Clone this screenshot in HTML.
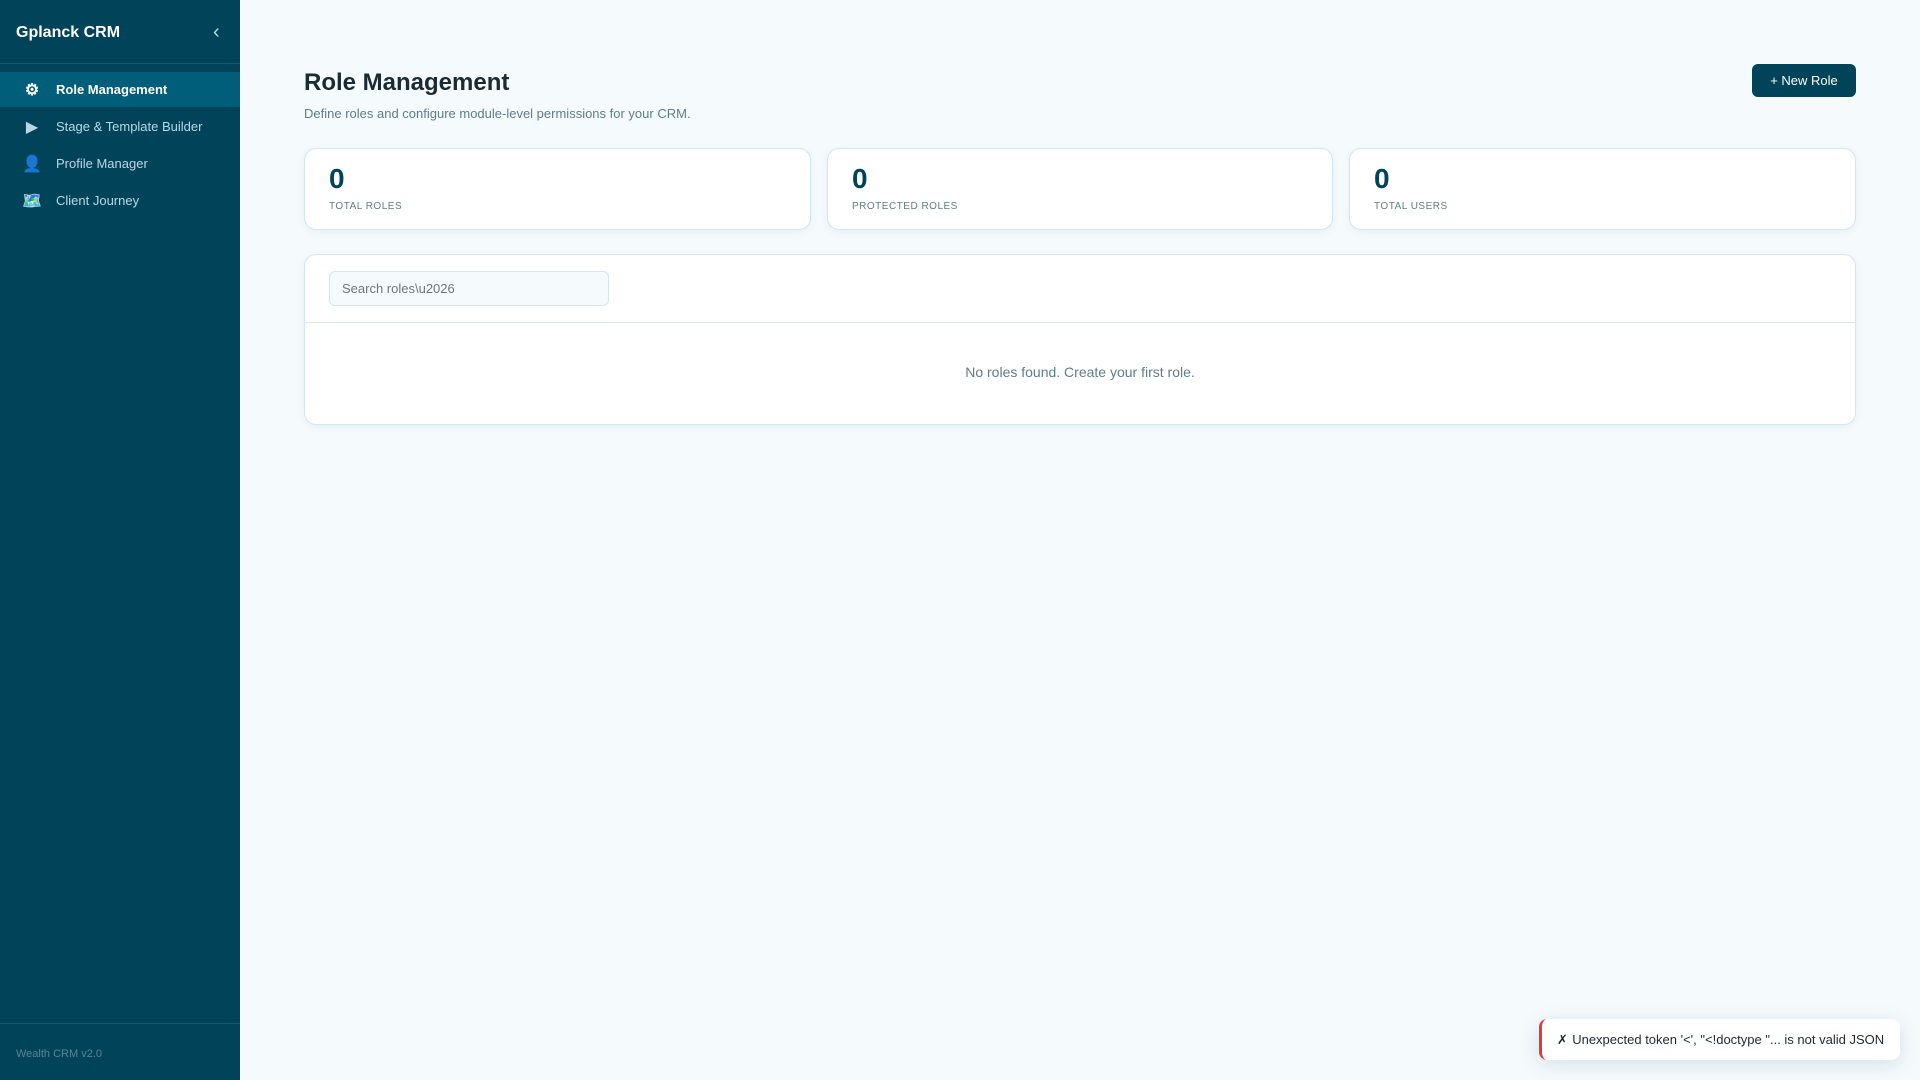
<!DOCTYPE html>
<html>
<head>
<meta charset="utf-8">
<style>
*{box-sizing:border-box;margin:0;padding:0}
html,body{width:1920px;height:1080px;overflow:hidden;background:#f5fafd;font-family:"Liberation Sans",sans-serif}
.abs{position:absolute;white-space:nowrap}
#side{position:absolute;left:0;top:0;width:240px;height:1080px;background:#01445a}
.item{position:absolute;left:0;width:240px;height:35px;color:#b8d8e6;font-size:13px}
.item.on{background:#015e7a;color:#fff;font-weight:700}
.item .ic{position:absolute;left:20px;width:24px;top:1px;height:35px;line-height:35px;text-align:center;font-size:16px}
.item .tx{position:absolute;left:56px;top:0;line-height:35px;white-space:nowrap}
.card{position:absolute;top:148px;height:82px;background:#fff;border:1px solid #d0e8f2;border-radius:12px;box-shadow:0 2px 8px rgba(1,68,90,.06)}
.card b{position:absolute;left:24px;top:14px;font-size:28px;line-height:32px;color:#01445a}
.card span{position:absolute;left:24px;top:52px;font-size:10px;line-height:12px;letter-spacing:.5px;color:#5f7d8a;white-space:nowrap}
</style>
</head>
<body>
<div id="side">
  <div class="abs" style="left:16px;top:22px;font-size:16px;line-height:22px;font-weight:700;color:#fff">Gplanck CRM</div>
  <div class="abs" style="left:213px;top:20px;font-size:20px;line-height:24px;color:#b8d8e6">‹</div>
  <div class="abs" style="left:0;top:63px;width:240px;height:1px;background:#0f5a6c"></div>
  <div class="item on" style="top:72px"><span class="ic">⚙</span><span class="tx">Role Management</span></div>
  <div class="item" style="top:109px"><span class="ic">▶</span><span class="tx">Stage &amp; Template Builder</span></div>
  <div class="item" style="top:146px"><span class="ic">👤</span><span class="tx">Profile Manager</span></div>
  <div class="item" style="top:183px"><span class="ic">🗺️</span><span class="tx">Client Journey</span></div>
  <div class="abs" style="left:0;top:1023px;width:240px;height:1px;background:#0f5a6c"></div>
  <div class="abs" style="left:16px;top:1047px;font-size:11px;line-height:14px;color:#5b8494">Wealth CRM v2.0</div>
</div>

<div class="abs" style="left:304px;top:67px;font-size:24px;line-height:32px;font-weight:700;color:#1a2b33">Role Management</div>
<div class="abs" style="left:304px;top:105px;font-size:13px;line-height:17px;color:#5f7d8a">Define roles and configure module-level permissions for your CRM.</div>
<div class="abs" style="left:1752px;top:64px;width:104px;height:33px;background:#01445a;border-radius:6px;color:#fff;font-size:13px;line-height:33px;text-align:center">+ New Role</div>

<div class="card" style="left:304px;width:507px"><b>0</b><span>TOTAL ROLES</span></div>
<div class="card" style="left:827px;width:506px"><b>0</b><span>PROTECTED ROLES</span></div>
<div class="card" style="left:1349px;width:507px"><b>0</b><span>TOTAL USERS</span></div>

<div style="position:absolute;left:304px;top:254px;width:1552px;height:171px;background:#fff;border:1px solid #d0e8f2;border-radius:12px;box-shadow:0 2px 8px rgba(1,68,90,.06)">
  <div style="position:absolute;left:24px;top:16px;width:280px;height:35px;background:#f5fafd;border:1px solid #d0e8f2;border-radius:6px;padding-left:12px;font-size:13px;line-height:33px;color:#757575">Search roles\u2026</div>
  <div style="position:absolute;left:0;top:67px;width:1550px;height:1px;background:#d9e8ee"></div>
  <div style="position:absolute;left:0;top:108px;width:1550px;text-align:center;font-size:14px;line-height:18px;color:#5f7d8a">No roles found. Create your first role.</div>
</div>

<div style="position:absolute;left:1539px;top:1019px;width:361px;height:41px;background:#fff;border-left:3px solid #e53935;border-radius:8px;box-shadow:0 4px 20px rgba(1,68,90,.14);padding-left:15px;font-size:13px;line-height:41px;color:#1a2b33;white-space:nowrap"><span style="margin-right:.7px">✗</span> Unexpected token '&lt;', "&lt;!doctype "... is not valid JSON</div>
</body>
</html>
